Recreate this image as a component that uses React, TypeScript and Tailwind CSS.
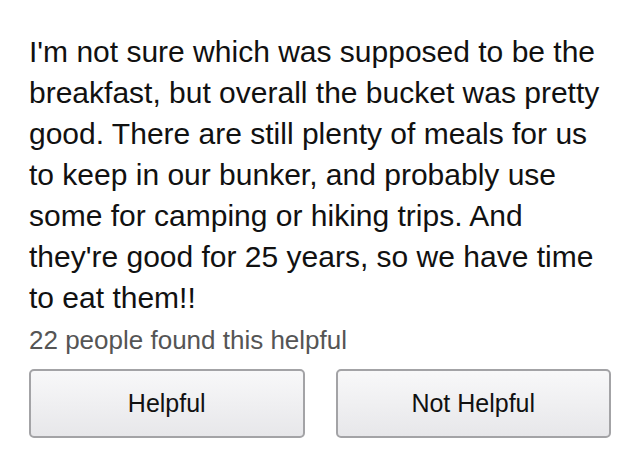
import React from "react";

const ReviewFooter = () => {
  return (
    <div className="min-h-[461px] w-full bg-white font-['Liberation_Sans',Arial,sans-serif]">
      <div className="w-[582px] pl-[29px] pt-[31px] box-content">
        <p className="text-[30px] leading-[41px] text-[#111]">
          I'm not sure which was supposed to be the breakfast, but overall the
          bucket was pretty good. There are still plenty of meals for us to
          keep in our bunker, and probably use some for camping or hiking
          trips. And they're good for 25 years, so we have time to eat them!!
        </p>
        <p className="mt-[7px] text-[26px] leading-[30px] text-[#555]">
          22 people found this helpful
        </p>
        <div className="mt-[14px] flex gap-[31px]">
          <button className="h-[69px] w-[276px] rounded-[5px] border-2 border-[#a3a3a6] bg-gradient-to-b from-[#f8f8f9] to-[#e7e7ea] text-[25px] text-[#111]">
            Helpful
          </button>
          <button className="h-[69px] w-[276px] rounded-[5px] border-2 border-[#a3a3a6] bg-gradient-to-b from-[#f8f8f9] to-[#e7e7ea] text-[25px] text-[#111]">
            Not Helpful
          </button>
        </div>
      </div>
    </div>
  );
};

export default function App() {
  return <ReviewFooter />;
}
